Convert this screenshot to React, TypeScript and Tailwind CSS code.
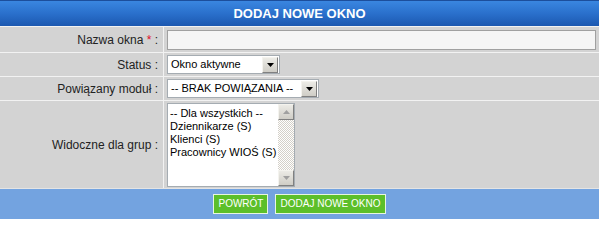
const font = "font-['Liberation_Sans',Arial,sans-serif]";

function ArrowBtn({ up = false, dim = false }: { up?: boolean; dim?: boolean }) {
  return (
    <span className="flex h-[16px] w-[16px] shrink-0 items-center justify-center border border-t-[#f4f3ee] border-l-[#f4f3ee] border-r-[#808080] border-b-[#808080] bg-gradient-to-b from-[#ecebe6] to-[#cfcdc6]">
      <svg width="7" height="4" viewBox="0 0 7 4" className={up ? "rotate-180" : ""}>
        <path d="M0 0h7L3.5 4z" fill={dim ? "#a0a0a0" : "#000"} />
      </svg>
    </span>
  );
}

function FakeSelect({ value, width }: { value: string; width: string }) {
  return (
    <div
      className={`flex h-[19px] items-center justify-between border border-[#a5acb2] bg-white pl-[3px] pr-[1px] text-[11px] text-black ${width}`}
    >
      <span className="whitespace-nowrap leading-none">{value}</span>
      <ArrowBtn />
    </div>
  );
}

function Label({ children }: { children: React.ReactNode }) {
  return (
    <div className="flex items-center justify-end bg-[#d3d3d3] pr-[5px] text-[12px] text-[#222]">
      {children}
    </div>
  );
}

export default function App() {
  const groups = [
    "-- Dla wszystkich --",
    "Dziennikarze (S)",
    "Klienci (S)",
    "Pracownicy WIOŚ (S)",
  ];

  return (
    <div className={`h-[219px] w-[599px] bg-[#d3d3d3] ${font}`}>
      <div className="flex h-[26px] items-center justify-center border-t border-[#1c4e9c] bg-gradient-to-b from-[#3a86e0] via-[#2a70cc] to-[#1c58b0] text-[13px] font-bold text-white">
        DODAJ NOWE OKNO
      </div>

      <div className="grid grid-cols-[163px_1fr] gap-px bg-[#f2f2f2] pt-px">
        <Label>
          Nazwa okna&nbsp;<span className="text-[#e0102a]">*</span>&nbsp;:
        </Label>
        <div className="flex h-[25px] items-center bg-[#d3d3d3] px-[3px]">
          <div className="h-[20px] w-full border border-[#a0a0a0] bg-[#f5f5f5]" />
        </div>

        <Label>Status :</Label>
        <div className="flex h-[23px] items-center bg-[#d3d3d3] pl-[3px]">
          <FakeSelect value="Okno aktywne" width="w-[113px]" />
        </div>

        <Label>Powiązany moduł :</Label>
        <div className="flex h-[23px] items-center bg-[#d3d3d3] pl-[3px]">
          <FakeSelect value="-- BRAK POWIĄZANIA --" width="w-[152px]" />
        </div>

        <Label>Widoczne dla grup :</Label>
        <div className="flex h-[87px] items-start bg-[#d3d3d3] pl-[3px] pt-[2px]">
          <div className="flex h-[84px] w-[128px] border border-[#a5acb2] bg-white">
            <div className="flex-1 pl-[2px] pt-[3px] text-[11px] leading-[13px] text-black">
              {groups.map((g) => (
                <div key={g} className="whitespace-nowrap">
                  {g}
                </div>
              ))}
            </div>
            <div className="flex w-[16px] flex-col bg-[repeating-conic-gradient(#fff_0_25%,#d4d0c8_0_50%)] bg-[length:2px_2px]">
              <ArrowBtn up dim />
              <div className="flex-1" />
              <ArrowBtn dim />
            </div>
          </div>
        </div>
      </div>

      <div className="flex h-[31px] items-center justify-center gap-[7px] border-t border-[#e4e4e4] bg-[#73a3e0] pb-px">
        <button className="h-[20px] border border-[#e8f5e0] bg-[#5cbf2a] px-[4px] text-[10px] text-white">
          POWRÓT
        </button>
        <button className="h-[20px] border border-[#e8f5e0] bg-[#5cbf2a] px-[4px] text-[10px] text-white">
          DODAJ NOWE OKNO
        </button>
      </div>
    </div>
  );
}
